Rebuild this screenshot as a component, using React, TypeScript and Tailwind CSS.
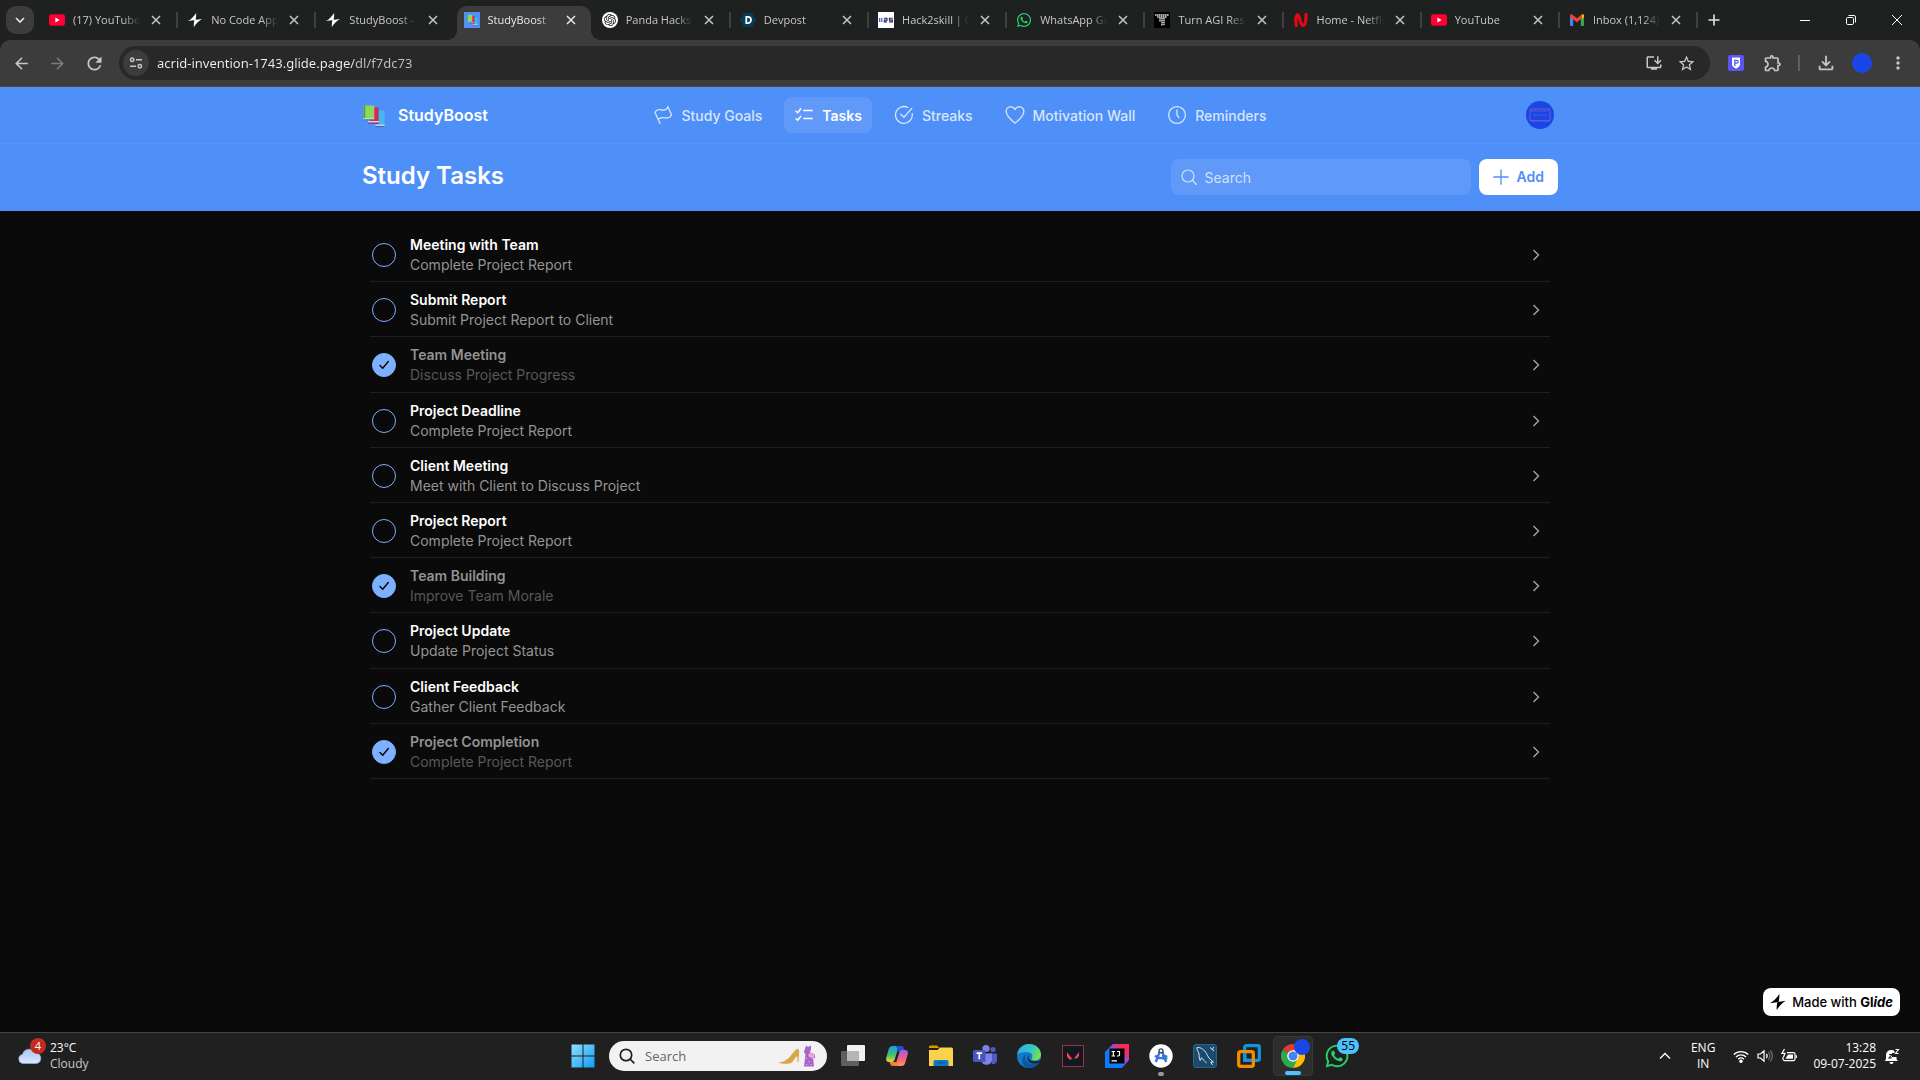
import type { ReactNode } from "react";
import { FaWhatsapp } from "react-icons/fa";
import {
  MdArrowBack,
  MdArrowForward,
  MdMoreVert,
  MdOutlineExtension,
  MdOutlineFileDownload,
  MdOutlineInstallDesktop,
  MdRefresh,
  MdStarBorder,
} from "react-icons/md";
import { SiOpenai } from "react-icons/si";

/* ---------- favicons ---------- */

const YouTubeIcon = () => (
  <svg viewBox="0 0 16 16" className="size-4">
    <rect y="2.2" width="16" height="11.6" rx="2.8" fill="#ff0033" />
    <path d="M6.4 5.6v4.8L10.6 8z" fill="#fff" />
  </svg>
);

const BoltIcon = ({ className }: { className: string }) => (
  <svg viewBox="0 0 16 16" className={className} fill="currentColor">
    <path d="M9.3 0c.2 3-.1 5.600-.7 8L0 9.200C3.500 7.500 6.500 4 9.300 0zM6.700 16c-.2-3 .1-5.600.7-8L16 6.800C12.500 8.500 9.500 12 6.700 16z" />
  </svg>
);

const Books = () => (
  <g>
    <path d="M14.5 7.5h8v14h-8z" fill="#45b8f0" />
    <path d="M14.5 7.5h2v14h-2z" fill="#2389c9" />
    <path d="M13.5 21.5h9v1.6h-9z" fill="#d9d3ea" />
    <path d="M13.5 23.1h9v.9h-9z" fill="#2a62ad" />
    <path d="M8 4.5h8.5V18H8z" fill="#d8265c" />
    <path d="M6 18h11v1.6H6z" fill="#dcd5ec" />
    <path d="M6 19.6h11v1H6z" fill="#9c1c55" />
    <path d="M1.5 2.5h10.8v12.6H1.5z" fill="#8fd95a" />
    <path d="M1.5 2.5h1.8v12.6H1.5z" fill="#4da04d" />
    <path d="M1.5 15.1h10.8v1.3H1.5z" fill="#dcd9e6" />
    <path d="M1.5 16.4h10.8v.9H1.5z" fill="#3f8a4a" />
  </g>
);

const StudyIcon = () => (
  <svg viewBox="0 0 16 16" className="size-4">
    <rect width="16" height="16" fill="#4f8ff7" />
    <g transform="translate(2.2 1.6) scale(.5)">
      <Books />
    </g>
  </svg>
);

const PandaIcon = () => (
  <span className="flex size-4 items-center justify-center rounded-full bg-white text-[#1c1c1c]">
    <SiOpenai className="size-3" />
  </span>
);

const DevpostIcon = () => (
  <svg viewBox="0 0 16 16" className="size-4">
    <path d="M4 1h8l4 7-4 7H4L0 8z" fill="#003e54" />
    <path d="M6.3 4.9h1.6a3.1 3.1 0 0 1 0 6.2H6.3z" fill="none" stroke="#fff" strokeWidth="1.8" />
  </svg>
);

const HackIcon = () => (
  <svg viewBox="0 0 16 16" className="size-4">
    <rect width="16" height="16" fill="#fff" />
    <path d="M1 8h4" stroke="#3d6fd0" strokeWidth="4" strokeDasharray="1.3 .8" />
    <path d="M6 6.2h3v1.9H6.3v1.8H9M14.8 6.2h-3.4v1.9h3v1.8h-3.4" stroke="#2c2760" strokeWidth="1.1" fill="none" />
  </svg>
);

const TIcon = () => (
  <svg viewBox="0 0 16 16" className="size-4">
    <rect width="16" height="16" fill="#000" />
    <path d="M1 3h14M3 5h10" stroke="#ddd" strokeWidth="1.5" strokeDasharray="1.6 .4" />
    <path d="M6 6v4M8 6v8M10 6v7" stroke="#ddd" strokeWidth="1.5" strokeDasharray="1.6 .4" />
  </svg>
);

const NetIcon = () => (
  <svg viewBox="0 0 16 16" className="size-4" fill="none" stroke="#e50914" strokeWidth="3.2" strokeLinecap="round">
    <path d="M3.2 13.6C2.6 9 2.8 4 4.4 2.8c1.8-.6 3 10 5.2 10.6 3 .4 3.6-6 3.4-11" />
  </svg>
);

const GmailIcon = () => (
  <svg viewBox="0 0 16 16" className="size-4">
    <path d="M1 4.6l3.2 2.4v7H2a1 1 0 0 1-1-1z" fill="#4285f4" />
    <path d="M15 4.6L11.8 7v7H14a1 1 0 0 0 1-1z" fill="#34a853" />
    <path d="M11.8 3.2L13 2.4c1-.6 2 .1 2 1.2v1.6L11.8 7.6z" fill="#fbbc04" />
    <path d="M1 3.6C1 2.4 2.2 1.8 3 2.4L8 6.2l5-3.8v3.9l-5 3.9-7-5.2z" fill="#ea4335" />
  </svg>
);

/* ---------- browser ---------- */

const CloseGlyph = ({ className }: { className: string }) => (
  <svg viewBox="0 0 10 10" className={className} fill="none" stroke="currentColor" strokeWidth="1.5">
    <path d="M1 1l8 8M9 1l-8 8" />
  </svg>
);

const tabs: { title: string; icon: ReactNode; active?: boolean; divider?: boolean }[] = [
  { title: "(17) YouTube", icon: <YouTubeIcon /> },
  { title: "No Code App", icon: <BoltIcon className="mx-px size-3.5 text-white" />, divider: true },
  { title: "StudyBoost - Glide", icon: <BoltIcon className="mx-px size-3.5 text-white" />, divider: true },
  { title: "StudyBoost", icon: <StudyIcon />, active: true },
  { title: "Panda Hacks", icon: <PandaIcon /> },
  { title: "Devpost", icon: <DevpostIcon />, divider: true },
  { title: "Hack2skill | Open", icon: <HackIcon />, divider: true },
  { title: "WhatsApp Group", icon: <FaWhatsapp className="size-4 text-[#25d366]" />, divider: true },
  { title: "Turn AGI Research", icon: <TIcon />, divider: true },
  { title: "Home - Netflix", icon: <NetIcon />, divider: true },
  { title: "YouTube", icon: <YouTubeIcon />, divider: true },
  { title: "Inbox (1,124)", icon: <GmailIcon />, divider: true },
];

function TabStrip() {
  return (
    <div className="flex h-10 items-stretch bg-[#1f2020] pl-1.5">
      <button aria-label="Search tabs" className="mt-1.5 mr-1 flex size-7 items-center justify-center rounded-[10px] bg-[#3c3c3c] text-[#e3e3e3]">
        <svg viewBox="0 0 10 10" className="size-2.5" fill="none" stroke="currentColor" strokeWidth="1.7">
          <path d="M1 3l4 4 4-4" />
        </svg>
      </button>
      <div className="flex min-w-0 flex-1 items-stretch">
        {tabs.map((t, i) => (
          <div key={i} className="relative flex min-w-0 flex-1">
            {t.divider && <span className="absolute top-3 left-0 h-4 w-0.5 bg-[#3f4040]" />}
            {t.active && (
              <span className="absolute top-1.5 right-0 bottom-0 left-1 rounded-t-[10px] bg-[#3c3c3c]">
                <span className="absolute bottom-0 -left-2.5 size-2.5 bg-[radial-gradient(circle_at_0_0,#1f2020_10px,#3c3c3c_10px)]" />
                <span className="absolute -right-2.5 bottom-0 size-2.5 bg-[radial-gradient(circle_at_100%_0,#1f2020_10px,#3c3c3c_10px)]" />
              </span>
            )}
            <div className={"relative flex min-w-0 flex-1 items-center gap-2 pr-3 pl-[11px] " + (t.active ? "text-[#e8e8e8]" : "text-[#c7c7c7]")}>
              <span className="shrink-0">{t.icon}</span>
              <button className="min-w-0 flex-1 overflow-hidden text-left text-[11px] leading-5 whitespace-nowrap [mask-image:linear-gradient(to_right,black_75%,transparent)]">
                {t.title}
              </button>
              <button aria-label={"Close " + t.title} className="flex size-4 shrink-0 items-center justify-center">
                <CloseGlyph className="size-2.5" />
              </button>
            </div>
          </div>
        ))}
      </div>
      <div className="flex items-center text-[#e3e3e3]">
        <span className="h-4 w-0.5 bg-[#3f4040]" />
        <button aria-label="New tab" className="flex w-8 justify-center">
          <svg viewBox="0 0 12 12" className="size-3" stroke="currentColor" strokeWidth="1.6">
            <path d="M6 .5v11M.5 6h11" />
          </svg>
        </button>
        <div className="ml-13 flex text-white">
          <button aria-label="Minimize" className="flex w-[46px] items-center justify-center">
            <span className="h-px w-2.5 bg-white" />
          </button>
          <button aria-label="Restore" className="flex w-[46px] justify-center">
            <svg viewBox="0 0 10 10" className="size-2.5" fill="none" stroke="currentColor">
              <rect x=".5" y="2.5" width="7" height="7" rx="1.2" />
              <path d="M2.5.5H8A1.5 1.5 0 0 1 9.5 2v5.5" />
            </svg>
          </button>
          <button aria-label="Close window" className="flex w-[46px] justify-center">
            <svg viewBox="0 0 10 10" className="size-2.5" stroke="currentColor">
              <path d="M0 0l10 10M10 0L0 10" />
            </svg>
          </button>
        </div>
      </div>
    </div>
  );
}

function Toolbar() {
  return (
    <div className="bg-[#1f2020]">
      <div className="flex h-[47px] items-center rounded-t-[10px] border-b border-[#4a4a4a] bg-[#3c3c3c] pl-3 text-[#c7c7c7]">
        <button aria-label="Back" className="mr-[17px]"><MdArrowBack className="size-[19px]" /></button>
        <button aria-label="Forward" className="mr-[17px] text-[#7b7b7b]"><MdArrowForward className="size-[19px]" /></button>
        <button aria-label="Reload" className="mr-3.5"><MdRefresh className="size-[21px]" /></button>
        <div className="flex h-[34px] min-w-0 flex-1 items-center rounded-full bg-[#282828] pr-3.5 pl-1">
          <button aria-label="Site information" className="flex size-[26px] items-center justify-center rounded-full bg-[#3c3c3c]">
            <svg viewBox="0 0 14 14" className="size-3.5" fill="none" stroke="currentColor" strokeWidth="1.5">
              <circle cx="3.2" cy="3.7" r="1.7" />
              <path d="M7 3.7h6M1 10.3h6" />
              <circle cx="10.8" cy="10.3" r="1.7" />
            </svg>
          </button>
          <input
            aria-label="Address"
            defaultValue="acrid-invention-1743.glide.page/dl/f7dc73"
            className="ml-2 min-w-0 flex-1 bg-linear-to-r from-[#f0f0f0] from-[196px] to-[#c0c0c0] to-[197px] bg-clip-text font-['Noto_Sans','Open_Sans',sans-serif] text-[13px] leading-5 text-transparent outline-none"
          />
          <button aria-label="Install app" className="mr-3.5"><MdOutlineInstallDesktop className="size-[18px]" /></button>
          <button aria-label="Bookmark"><MdStarBorder className="size-[19px]" /></button>
        </div>
        <div className="flex items-center pr-3 pl-[18px]">
          <button aria-label="Shield extension" className="mr-[19px] flex size-4 items-center justify-center rounded-xs bg-[#5b55f5]">
            <svg viewBox="0 0 16 16" className="size-4">
              <path d="M4 2.5h8v6.8c0 2-1.8 3.3-4 4.5-2.2-1.2-4-2.5-4-4.5z" fill="#fff" />
              <path d="M6.8 11V5.3h1.9a1.3 1.3 0 0 1 0 2.8H6.8" fill="none" stroke="#5b55f5" strokeWidth="1.3" />
            </svg>
          </button>
          <button aria-label="Extensions" className="mr-[15px]"><MdOutlineExtension className="size-5" /></button>
          <span className="mr-[15px] h-4 w-0.5 bg-[#5f5f5f]" />
          <button aria-label="Downloads" className="mr-[15px]"><MdOutlineFileDownload className="size-[22px]" /></button>
          <button aria-label="Profile" className="mr-4 size-5 rounded-full bg-[#1a46e8]" />
          <button aria-label="Menu"><MdMoreVert className="size-5" /></button>
        </div>
      </div>
    </div>
  );
}

/* ---------- app ---------- */

const stroke = {
  viewBox: "0 0 20 20",
  className: "size-5",
  fill: "none",
  stroke: "currentColor",
  strokeWidth: 1.3,
  strokeLinecap: "round" as const,
  strokeLinejoin: "round" as const,
};

const nav: { label: string; icon: ReactNode; active?: boolean }[] = [
  {
    label: "Study Goals",
    icon: (
      <svg {...stroke}>
        <path d="M7 18.300L2 7.500C4 3.800 6.500 4.500 9 5c2.700.5 5-.2 5.800-3.300L18.600 9.800c-1.200 2.300-3.200 3.500-5.500 3.100-3-.5-6-1.300-7.800 1.600" />
      </svg>
    ),
  },
  {
    label: "Tasks",
    active: true,
    icon: (
      <svg {...stroke} strokeWidth={1.5}>
        <path d="M2 6.2l1.7 1.5 3-3.900M2 13.8l1.700 1.500 3-3.900M9.800 5.600h8.200M9.800 13.400h8.200" />
      </svg>
    ),
  },
  {
    label: "Streaks",
    icon: (
      <svg {...stroke}>
        <path d="M18.2 8.600A8.400 8.400 0 1 1 13.800 2.500M6.800 9.300l3.200 3L17.800 3.400" />
      </svg>
    ),
  },
  {
    label: "Motivation Wall",
    icon: (
      <svg {...stroke}>
        <path d="M10 18.200C5.500 14.500 1.200 10.800 1.200 6.700A4.600 4.600 0 0 1 10 4.600a4.600 4.600 0 0 1 8.800 2.100c0 4.100-4.300 7.800-8.800 11.500z" />
      </svg>
    ),
  },
  {
    label: "Reminders",
    icon: (
      <svg {...stroke}>
        <circle cx="10" cy="10" r="8.4" />
        <path d="M10 5v5l2 2.600" />
      </svg>
    ),
  },
];

function AppHeader() {
  return (
    <header className="bg-[#4f8ff8] text-white">
      <div className="border-b border-[#5a96f9]">
        <div className="mx-auto grid h-14 max-w-[1196px] grid-cols-[1fr_auto_1fr] items-center">
          <a href="#home" className="flex items-center gap-3 text-[16px] leading-6 font-semibold">
            <svg viewBox="0 0 24 24" className="size-6"><Books /></svg>
            StudyBoost
          </a>
          <nav className="flex items-center gap-3">
            {nav.map((n) => (
              <a
                key={n.label}
                href={"#" + n.label}
                className={
                  "flex h-9 items-center gap-2 rounded-lg px-2.5 text-[14px] leading-5 " +
                  (n.active ? "bg-[#6199f9] font-semibold text-white" : "font-medium text-[#d8e6fe]")
                }
              >
                {n.icon}
                <span className="pt-0.5">{n.label}</span>
              </a>
            ))}
          </nav>
          <button aria-label="Account" className="mr-1 flex size-7 items-center justify-center justify-self-end rounded-full bg-[#1a46e8]">
            <svg viewBox="0 0 28 28" className="size-7" fill="none" stroke="#6c5fc0">
              <rect x="4" y="8" width="20" height="12" rx="1" />
              <path d="M5 10h17M8 14h12" strokeDasharray="2 .6" />
              <path d="M4 19.5h20" stroke="#5d5cd0" />
            </svg>
          </button>
        </div>
      </div>
      <div className="mx-auto flex max-w-[1196px] items-center pt-[15px] pb-4">
        <h1 className="flex-1 pb-0.5 text-[24px] leading-8 font-semibold">Study Tasks</h1>
        <label className="mr-2 flex h-9 w-[300px] items-center gap-2 rounded-lg bg-[#6199f9] px-2.5 text-[#cfe0fe]">
          <svg viewBox="0 0 16 16" className="size-4" fill="none" stroke="currentColor" strokeWidth="1.2" strokeLinecap="round">
            <circle cx="7" cy="7" r="6" />
            <path d="M11.5 11.5l4 4" />
          </svg>
          <span className="sr-only">Search tasks</span>
          <input type="search" placeholder="Search" className="min-w-0 flex-1 bg-transparent pt-0.5 text-[14px] leading-5 outline-none placeholder:text-[#cfe0fe]" />
        </label>
        <button className="flex h-9 items-center gap-2 rounded-lg bg-white px-3.5 text-[14px] leading-5 font-semibold text-[#4f8ff8]">
          <svg viewBox="0 0 16 16" className="size-4" stroke="currentColor" strokeWidth="1.3" strokeLinecap="round">
            <path d="M8 .8v14.400M.8 8h14.400" />
          </svg>
          Add
        </button>
      </div>
    </header>
  );
}

const tasks = [
  { title: "Meeting with Team", note: "Complete Project Report", done: false },
  { title: "Submit Report", note: "Submit Project Report to Client", done: false },
  { title: "Team Meeting", note: "Discuss Project Progress", done: true },
  { title: "Project Deadline", note: "Complete Project Report", done: false },
  { title: "Client Meeting", note: "Meet with Client to Discuss Project", done: false },
  { title: "Project Report", note: "Complete Project Report", done: false },
  { title: "Team Building", note: "Improve Team Morale", done: true },
  { title: "Project Update", note: "Update Project Status", done: false },
  { title: "Client Feedback", note: "Gather Client Feedback", done: false },
  { title: "Project Completion", note: "Complete Project Report", done: true },
];

function TaskList() {
  return (
    <ul className="mx-auto mt-4 grid min-h-[552px] w-full max-w-[1180px]">
      {tasks.map((t, i) => (
        <li key={i} className="flex items-center border-b border-[#1e1e1e] pt-0.5 pr-2 pl-0.5">
          <span className="grid size-6 shrink-0">
            <input
              id={"task-" + i}
              type="checkbox"
              defaultChecked={t.done}
              className="peer size-6 appearance-none rounded-full border border-[#7db0ff] [grid-area:1/1] checked:bg-[#7db0ff]"
            />
            <svg
              viewBox="0 0 24 24"
              className="pointer-events-none invisible size-6 [grid-area:1/1] peer-checked:visible"
              fill="none"
              stroke="#0a0a0a"
              strokeWidth="1.5"
              strokeLinecap="round"
              strokeLinejoin="round"
            >
              <path d="M8 12.500l2.700 2.700L16.300 8.500" />
            </svg>
          </span>
          <label htmlFor={"task-" + i} className="ml-3.5 flex-1 text-[14px] leading-5">
            <span className={"block font-semibold " + (t.done ? "text-[#929292]" : "text-white")}>{t.title}</span>
            <span className={"block " + (t.done ? "text-[#585858]" : "text-[#949494]")}>{t.note}</span>
          </label>
          <button aria-label={"Open " + t.title} className="flex size-3 items-center justify-center text-[#a5a5a5]">
            <svg viewBox="0 0 12 12" className="size-3" fill="none" stroke="currentColor" strokeWidth="1.4">
              <path d="M3.500 1l5 5-5 5" />
            </svg>
          </button>
        </li>
      ))}
    </ul>
  );
}

/* ---------- taskbar ---------- */

const apps: { name: string; icon: ReactNode }[] = [
  {
    name: "Task view",
    icon: (
      <svg viewBox="0 0 24 24" className="size-6">
        <rect x="0" y="7" width="18" height="15" rx="1" fill="#5f5f5f" />
        <rect x="6" y="1" width="18" height="16" rx="1" fill="#f2f2f2" />
        <path d="M6 7h12v10H6z" fill="#b5b5b5" />
      </svg>
    ),
  },
  {
    name: "Copilot",
    icon: (
      <svg viewBox="0 0 24 24" className="size-6">
        <defs>
          <linearGradient id="cpa" x1="0" y1="0" x2="0" y2="1">
            <stop offset="0" stopColor="#1f9af0" />
            <stop offset=".55" stopColor="#3fc06a" />
            <stop offset="1" stopColor="#f0d230" />
          </linearGradient>
          <linearGradient id="cpb" x1="0" y1="0" x2="0" y2="1">
            <stop offset="0" stopColor="#a45be8" />
            <stop offset=".5" stopColor="#ef5b8d" />
            <stop offset="1" stopColor="#ff9a4a" />
          </linearGradient>
        </defs>
        <path d="M15 2H7.500C5.500 2 4.400 3.200 3.800 5L1.300 13.500C.5 16 1.500 18 4 18h3c1.600 0 2.200-1 2.700-2.500L12.500 6.500C13.100 4.500 13.500 2 15 2z" fill="url(#cpa)" />
        <path d="M11 2h5c1.800 0 2.600 1 3 2.500L19.800 7.500H13z" fill="#1d55c9" />
        <path d="M9 22h7.500c2 0 3.100-1.200 3.700-3l2.500-8.500C23.500 8 22.500 6 20 6h-3c-1.600 0-2.200 1-2.700 2.500L11.500 17.500C10.900 19.500 10.500 22 9 22z" fill="url(#cpb)" />
        <path d="M13 22H8c-1.800 0-2.600-1-3-2.500L4.400 17.900h7z" fill="#f0803c" />
      </svg>
    ),
  },
  {
    name: "File Explorer",
    icon: (
      <svg viewBox="0 0 24 24" className="size-6">
        <path d="M0 3a1.500 1.500 0 0 1 1.500-1.500H8L10.500 4H0z" fill="#e09a00" />
        <path d="M0 6h8.500l2.500-2.500h11.500A1.500 1.500 0 0 1 24 5v17H0z" fill="#fcd14b" />
        <path d="M4.500 22v-4.500A1.500 1.500 0 0 1 6 16h12a1.500 1.500 0 0 1 1.500 1.500V22z" fill="#1178c8" />
        <path d="M8 18.800h8" stroke="#0b5896" strokeWidth="1.2" />
      </svg>
    ),
  },
  {
    name: "Teams",
    icon: (
      <svg viewBox="0 0 24 24" className="size-6">
        <circle cx="20" cy="5.5" r="2.6" fill="#5059c9" />
        <circle cx="13" cy="4.5" r="3.6" fill="#7b83eb" />
        <path d="M16 9.500h8v6.500a4 4 0 0 1-5 4z" fill="#5059c9" />
        <path d="M8 9.500h11v7a5.700 5.700 0 0 1-11 0z" fill="#7b83eb" />
        <rect x="0" y="6" width="12.5" height="12" rx="1.3" fill="#4b53bc" />
        <path d="M3.500 9.200h5.600M6.300 9.200v6" stroke="#fff" strokeWidth="1.7" />
      </svg>
    ),
  },
  {
    name: "Edge",
    icon: (
      <svg viewBox="0 0 24 24" className="size-6">
        <defs>
          <linearGradient id="edg" x1="0" y1="0" x2="1" y2=".4">
            <stop offset="0" stopColor="#2fa8e8" />
            <stop offset=".6" stopColor="#36c3c8" />
            <stop offset="1" stopColor="#6ddf58" />
          </linearGradient>
        </defs>
        <circle cx="12" cy="12" r="12" fill="#1278d0" />
        <path d="M.2 10.500C1 4.500 6 0 12 0c7 0 12 5 12 10.500 0 4-3 6-6.200 6-2.800 0-3.800-1-3-2.200 1.700-3-.3-6.300-4.800-6.300C5.500 8 1.500 9 .2 10.500z" fill="url(#edg)" />
        <path d="M9 9.500c-2 3-.8 8.500 4 10 3.500 1 6.700.2 9.300-1.500A12 12 0 0 1 12 24C7 23.500 4.500 19 5.500 15c.6-2.500 2-4.500 3.500-5.500z" fill="#0c56a0" />
        <path d="M12.500 10.500c-2 2-1.200 5.500 2.300 6.500 3 .8 6 .2 8.200-1l-.8 2.200c-2 1.200-5.500 1.600-7.700 1-4.500-1.300-5.400-6.700-2-8.700z" fill="#1c2024" />
      </svg>
    ),
  },
  {
    name: "Valorant",
    icon: (
      <svg viewBox="0 0 24 24" className="size-6">
        <rect x="1.5" y="1.5" width="21" height="21" fill="#101822" stroke="#9b3440" />
        <path d="M6 8l5.500 7.500H8.300L6 12.500zM18 8l-5 6.500h3l2-2.500z" fill="#fa4454" />
      </svg>
    ),
  },
  {
    name: "IntelliJ IDEA",
    icon: (
      <svg viewBox="0 0 24 24" className="size-6">
        <defs>
          <linearGradient id="ij" x1="0" y1="1" x2="1" y2="0">
            <stop offset=".35" stopColor="#087cfa" />
            <stop offset=".6" stopColor="#9a4fd0" />
            <stop offset=".8" stopColor="#fe2857" />
          </linearGradient>
        </defs>
        <path d="M0 8l8-8h16v16l-7 8H0z" fill="url(#ij)" />
        <rect x="4.5" y="4.5" width="15" height="15" fill="#000" />
        <path d="M6.500 7.500h3.500M8.300 7.500v4.500M6.500 12h3.500M12 7.500h2.500v3.200q0 1.500-2.500 1.300M6.500 16.800h5.500" stroke="#fff" strokeWidth="1.2" fill="none" />
      </svg>
    ),
  },
  {
    name: "Android Studio",
    icon: (
      <svg viewBox="0 0 24 24" className="size-6">
        <circle cx="12" cy="12" r="11.7" fill="#fff" />
        <path d="M13 9l6 5-2 3-4-2z" fill="#3dbb6c" />
        <path d="M11 7L6.800 18M13 7l4.200 11M6.200 11.500c2.500 3.500 9 3.500 11.600 0" stroke="#3574e8" strokeWidth="2.3" fill="none" />
        <circle cx="12" cy="6.8" r="2" fill="#fff" stroke="#3d4450" strokeWidth="1.3" />
      </svg>
    ),
  },
  {
    name: "MySQL Workbench",
    icon: (
      <svg viewBox="0 0 24 24" className="size-6">
        <rect x=".5" y=".5" width="23" height="23" rx="2.5" fill="#1b4a6e" stroke="#2b6288" />
        <path d="M4 3.500c4-.5 7.500 2.500 9.500 6 1.500 3 2.700 6 7 8.500l-2.800.3 2 2.700M4 3.500c-.5 2.500 1.500 4 2 6.500.3 2.500 0 4.500 1.200 6.500l1.300-2.800c1.800 1.500 2.700 3.500 5 5.200M17 3.500l4 3.500M20.500 3l-1 3" stroke="#d8e6ee" fill="none" />
      </svg>
    ),
  },
  {
    name: "VMware",
    icon: (
      <svg viewBox="0 0 24 24" className="size-6" fill="none" strokeWidth="3.3">
        <rect x="7.700" y="1.7" width="14.6" height="14.6" rx="1.5" stroke="#1295d8" />
        <rect x="1.700" y="7.7" width="14.6" height="14.6" rx="1.5" stroke="#f38b00" />
        <path d="M7.700 9v7.300H13" stroke="#1295d8" />
      </svg>
    ),
  },
];

const ChromeLogo = () => (
  <svg viewBox="0 0 24 24" className="size-6">
    <path d="M12 12L1.600 6A12 12 0 0 1 22.400 6z" fill="#e33b2e" />
    <path d="M12 12L1.600 6A12 12 0 0 0 12 24l5.200-9z" fill="#2da94f" />
    <path d="M12 12h6L12 24A12 12 0 0 0 22.400 6H12z" fill="#fdbd00" />
    <circle cx="12" cy="12" r="5.8" fill="#fff" />
    <circle cx="12" cy="12" r="4.5" fill="#4285f4" />
  </svg>
);

function Taskbar() {
  return (
    <footer className="grid h-12 grid-cols-[1fr_auto_1fr] items-center border-t border-[#454545] bg-[#202020] pb-0.5 text-[12px] leading-4 text-white">
      <button className="flex items-center gap-2 justify-self-start pl-[18px] text-left">
        <span className="relative flex size-6">
          <svg viewBox="0 0 24 24" className="size-6">
            <defs>
              <linearGradient id="cloud" x1="0" y1="0" x2="0" y2="1">
                <stop offset="0" stopColor="#a9c5f2" />
                <stop offset="1" stopColor="#dbe9ff" />
              </linearGradient>
            </defs>
            <path d="M5 19.500a4.600 4.600 0 0 1-.5-9.100A7 7 0 0 1 17.500 9 5.300 5.300 0 0 1 18.500 19.500z" fill="url(#cloud)" stroke="#8db1ee" strokeWidth=".6" />
          </svg>
          <span className="absolute -top-1.5 left-3 flex size-4 items-center justify-center rounded-full bg-[#c42b1c] text-[11px]">4</span>
        </span>
        <span>
          <span className="block">23°C</span>
          <span className="block text-[#c8c8c8]">Cloudy</span>
        </span>
      </button>

      <div className="flex items-center">
        <button aria-label="Start" className="flex w-11 justify-center">
          <svg viewBox="0 0 24 24" className="size-6">
            <defs>
              <linearGradient id="win" x1="0" y1="0" x2="1" y2="1">
                <stop offset="0" stopColor="#8ce2ff" />
                <stop offset="1" stopColor="#0f9bf5" />
              </linearGradient>
            </defs>
            <path d="M.5.5h11v11H.5zM12.500.5h11v11h-11zM.5 12.500h11v11H.5zM12.500 12.500h11v11h-11z" fill="url(#win)" />
          </svg>
        </button>
        <label className="mx-1 flex h-[30px] w-[218px] items-center rounded-full bg-[#f2f2f2] px-2.5 text-[#1f1f1f]">
          <svg viewBox="0 0 16 16" className="size-4 shrink-0" fill="none" stroke="currentColor" strokeWidth="1.7">
            <circle cx="7" cy="7" r="5.7" />
            <path d="M11 11l4.300 4.300" />
          </svg>
          <span className="sr-only">Search Windows</span>
          <input placeholder="Search" className="ml-2.5 min-w-0 flex-1 bg-transparent text-[13px] leading-5 outline-none placeholder:text-[#666]" />
          <svg viewBox="0 0 40 24" className="h-6 w-10 shrink-0">
            <path d="M1 18.500c5-.2 8.500-2 12-6 2.500-3 4.500-6.500 8-8 1.500 1.500 1.200 3.500 1 5.500l-.5 8h-1l-.3-6c-3 2-4 7-7.500 7.500C8 20 4 19.800 1 18.500z" fill="#d9a747" />
            <path d="M29 1.500l2 1.500 3-1.500v4l-1 2.500 5 2.500v4l-2-1 1 9H27l1.500-12L27 8z" fill="#a866c8" />
            <path d="M33 8l5 3-2 4-5-3z" fill="#f0a0e0" />
            <path d="M29.500 14v1M32 17v1M29.500 20v1M34 20v1" stroke="#e8c8f4" />
          </svg>
        </label>
        <div className="flex">
          {apps.map((a) => (
            <button key={a.name} aria-label={a.name} className="relative flex w-11 justify-center">
              {a.icon}
              {a.name === "Android Studio" && <span className="absolute -bottom-2 h-1 w-1.5 rounded-full bg-[#9a9a9a]" />}
            </button>
          ))}
        </div>
        <button aria-label="Chrome" className="relative mx-0.5 flex size-10 items-center justify-center rounded-sm border border-[#373737] bg-[#2d2d2d]">
          <ChromeLogo />
          <span className="absolute top-0.5 right-0.5 size-4 rounded-full bg-[#1a46e8]" />
          <span className="absolute bottom-0 h-1 w-4 rounded-full bg-[#4cc2ff]" />
        </button>
        <button aria-label="WhatsApp" className="relative flex h-10 w-11 items-center justify-center">
          <FaWhatsapp className="size-[26px] text-[#25d366]" />
          <span className="absolute top-0.5 right-0 flex h-4 items-center rounded-full bg-[#4cc2ff] px-1 text-[12px] text-black">55</span>
        </button>
      </div>

      <div className="flex items-center justify-self-end pr-5">
        <button aria-label="Show hidden icons" className="mr-5">
          <svg viewBox="0 0 12 12" className="size-3" fill="none" stroke="currentColor" strokeWidth="1.3">
            <path d="M1 8.500l5-5 5 5" />
          </svg>
        </button>
        <button className="mr-[18px] text-center">
          <span className="block">ENG</span>
          <span className="block">IN</span>
        </button>
        <button aria-label="Network, volume and battery" className="mr-4 flex items-center gap-2">
          <svg viewBox="0 0 16 16" className="size-4" fill="none" stroke="currentColor" strokeWidth="1.4">
            <path d="M.8 6.600a10.200 10.200 0 0 1 14.400 0M3 9a7 7 0 0 1 10 0M5.200 11.200a4 4 0 0 1 5.600 0" />
            <circle cx="8" cy="13.2" r="1.1" fill="currentColor" />
          </svg>
          <svg viewBox="0 0 16 16" className="size-4" fill="none" stroke="currentColor" strokeWidth="1.2">
            <path d="M1 6h2.500L7 2.800v10.400L3.500 10H1zM9.300 6a3 3 0 0 1 0 4" />
            <path d="M11.300 4.200a5.400 5.400 0 0 1 0 7.600M13.200 2.500a8 8 0 0 1 0 11" stroke="#6f6f6f" />
          </svg>
          <svg viewBox="0 0 16 16" className="size-4" fill="none" stroke="currentColor" strokeWidth="1.2">
            <path d="M6 4.600h6.500a1.500 1.500 0 0 1 1.500 1.500v5a1.500 1.500 0 0 1-1.500 1.500h-9A1.500 1.500 0 0 1 2 11.100V9" />
            <path d="M7 6.500h5v4.200H4.500z" fill="currentColor" stroke="none" />
            <path d="M15.300 7.300v2.600M3.500 1L1 5.300h3L2.500 9" />
          </svg>
        </button>
        <button className="mr-2 text-right">
          <span className="block">13:28</span>
          <span className="block">09-07-2025</span>
        </button>
        <button aria-label="Notifications">
          <svg viewBox="0 0 16 16" className="size-4">
            <path d="M7 2a5 5 0 0 0-5 5v4l-1.200 2h13L12.500 11V9H8V5h2.500V3A5 5 0 0 0 7 2zM5.500 14h4a2 2 0 0 1-4 0z" fill="currentColor" />
            <path d="M11.500 1.500h3l-3 4h3" stroke="currentColor" strokeWidth="1.1" fill="none" />
            <path d="M5 6.500h3l-3 3.500h3" stroke="#202020" strokeWidth="1.1" fill="none" />
          </svg>
        </button>
      </div>
    </footer>
  );
}

export default function App() {
  return (
    <div className="flex min-h-screen flex-col bg-[#0a0a0a] font-['Open_Sans','Noto_Sans',sans-serif]">
      <TabStrip />
      <Toolbar />
      <main className="flex flex-1 flex-col font-['Inter',sans-serif]">
        <AppHeader />
        <TaskList />
        <div className="mt-auto flex justify-end pr-5 pb-4">
          <a href="#glide" className="flex h-7 items-center gap-1.5 rounded-lg bg-white px-[7px] text-[13px] leading-4 font-medium text-black">
            <BoltIcon className="size-4" />
            <span>
              Made with <b className="font-bold">Gl<i>ide</i></b>
            </span>
          </a>
        </div>
      </main>
      <Taskbar />
    </div>
  );
}
